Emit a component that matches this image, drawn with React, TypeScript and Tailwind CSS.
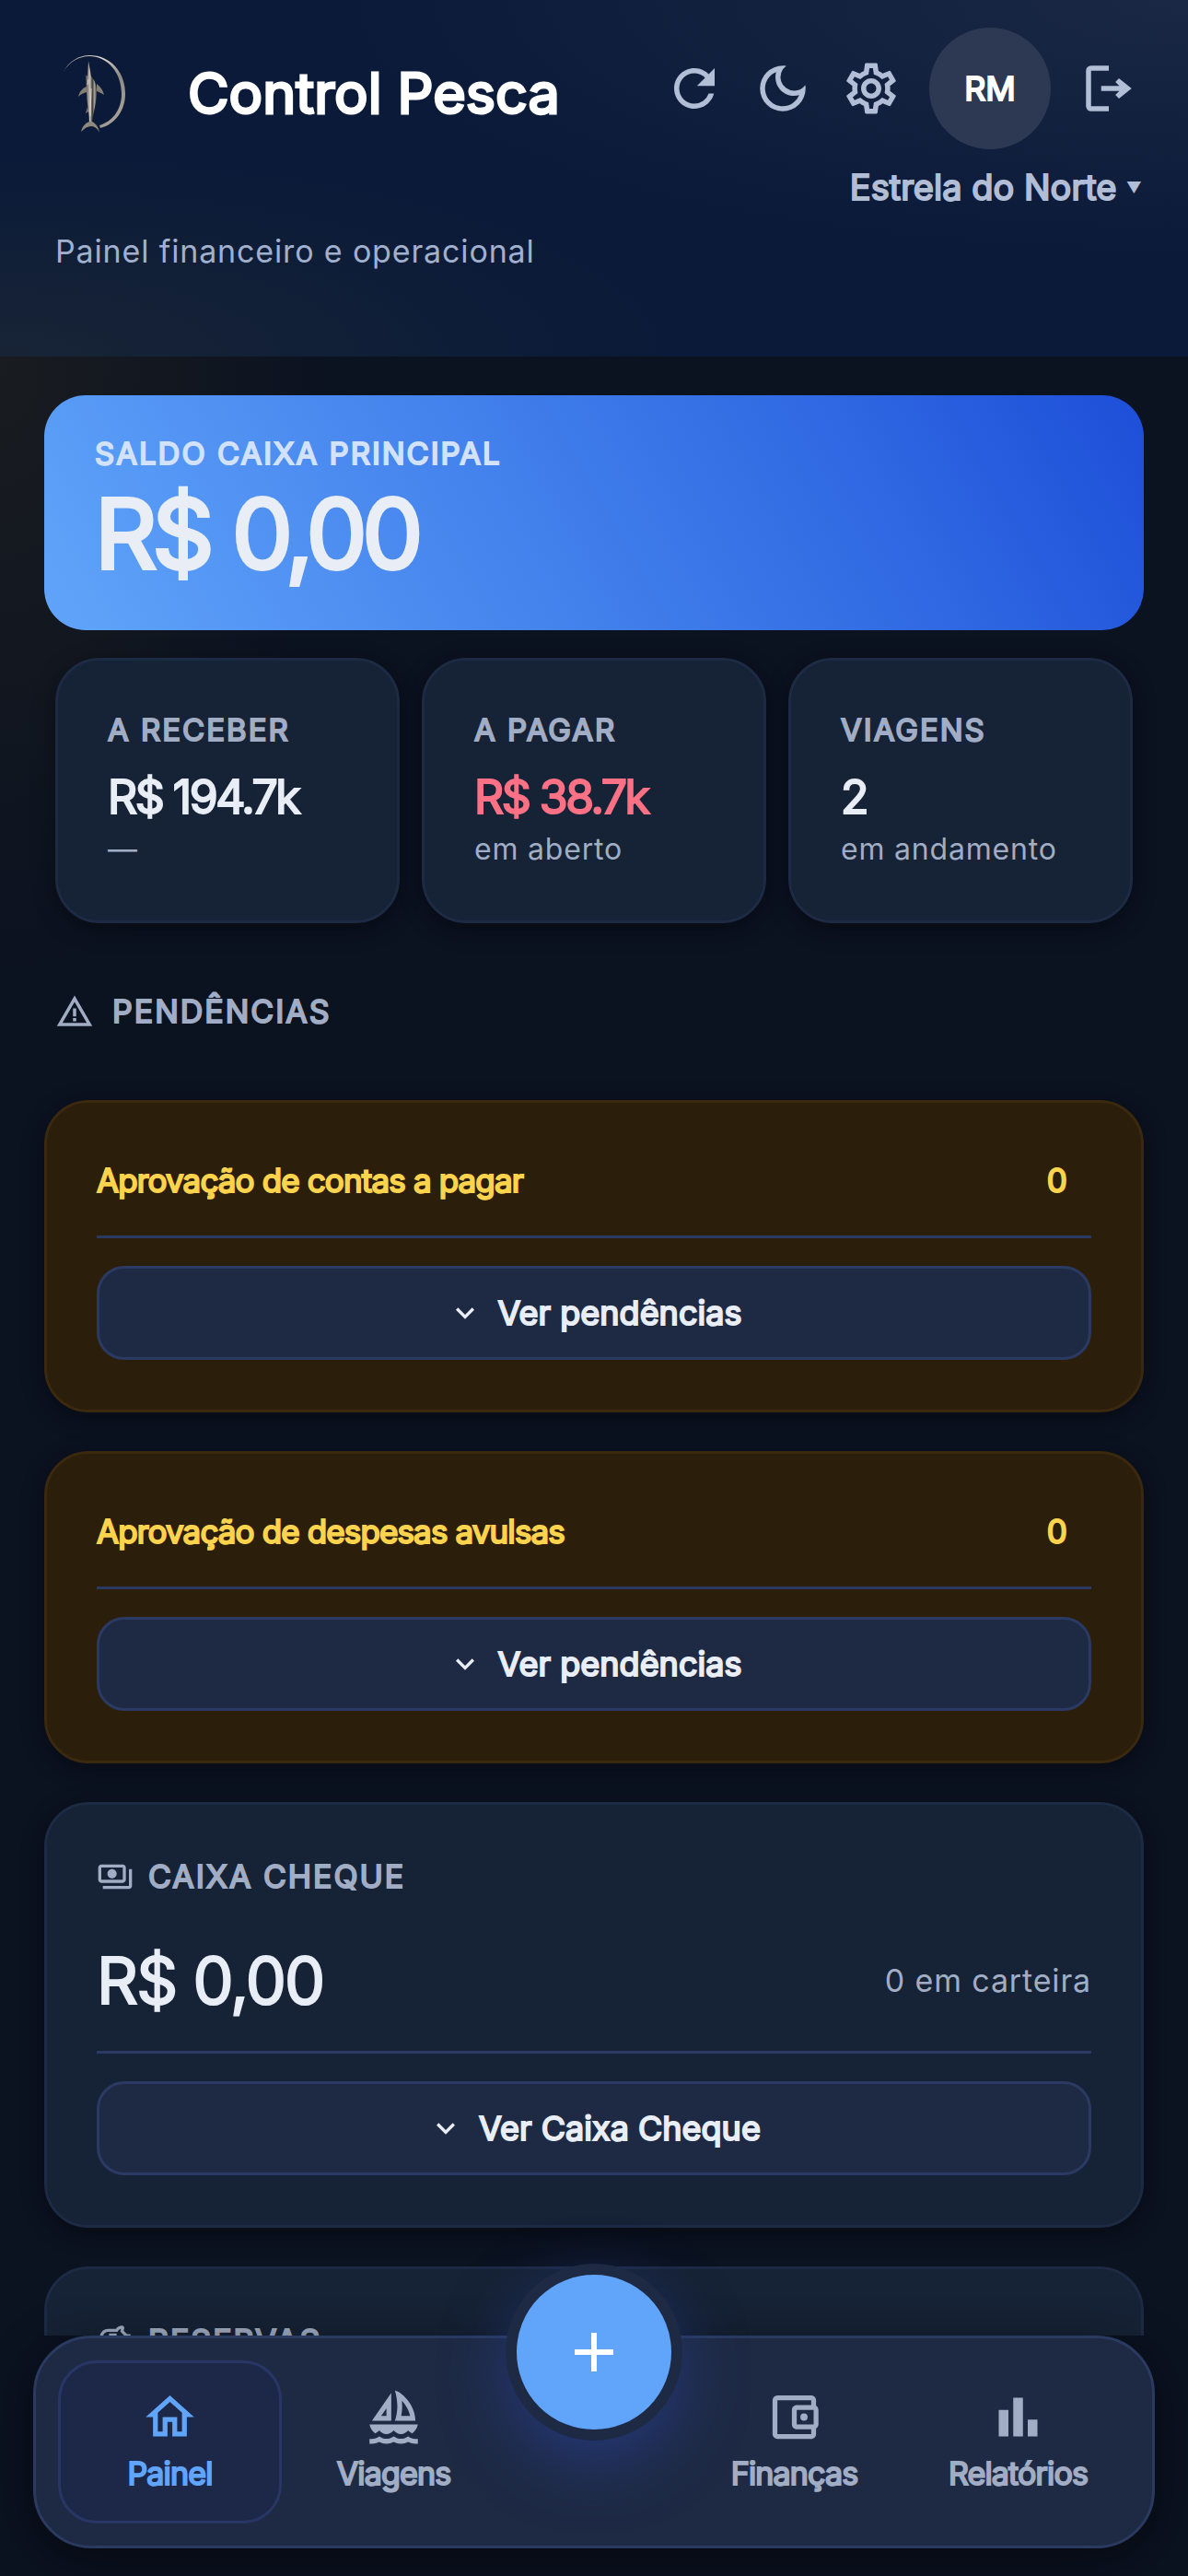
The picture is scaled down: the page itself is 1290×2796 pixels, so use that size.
import type { ReactNode } from 'react'
import {
  MdAdd,
  MdBarChart,
  MdExpandMore,
  MdOutlineAccountBalanceWallet,
  MdOutlineDarkMode,
  MdOutlineHome,
  MdOutlinePayments,
  MdOutlineSailing,
  MdOutlineSavings,
  MdOutlineSettings,
  MdRefresh,
  MdWarningAmber
} from 'react-icons/md'

const STATS = [
  { label: 'A receber', value: 'R$ 194.7k', note: '—', color: 'text-[#e9eef6]' },
  { label: 'A pagar', value: 'R$ 38.7k', note: 'em aberto', color: 'text-[#fb7185]' },
  { label: 'Viagens', value: '2', note: 'em andamento', color: 'text-[#e9eef6]' }
]

const PENDING = [
  { title: 'Aprovação de contas a pagar', count: 0 },
  { title: 'Aprovação de despesas avulsas', count: 0 }
]

export default function App() {
  return (
    <div className="flex h-screen flex-col overflow-hidden bg-[#0b1220] bg-[radial-gradient(ellipse_at_0%_14%,#191c20_0%,#0b1220_20%)] font-['Inter',sans-serif] text-[#e9eef6]">
      <Header />

      <main className="min-h-0 flex-1 overflow-hidden px-12 pt-[42px]">
        <section className="flex h-[255px] flex-col rounded-[45px] bg-[linear-gradient(60deg,#60a5fa,#2f68e2_74%,#1d4ed8)] px-[55px] pt-[42px]">
          <h2 className="text-[33px] leading-[42px] tracking-[2px] text-[#d3e2fb] uppercase [-webkit-text-stroke:2px]">
            Saldo caixa principal
          </h2>
          <p className="text-[105px] leading-[132px] tracking-tighter [-webkit-text-stroke:4px]">R$ 0,00</p>
        </section>

        <section className="mt-[30px] grid grid-cols-3 gap-6 px-3">
          {STATS.map(s => (
            <div
              key={s.label}
              className="h-[288px] rounded-[48px] border-3 border-[#1d2a44] bg-[#162235] px-[54px] pt-[54px] shadow-[0_6px_24px_rgba(0,0,0,0.4)]"
            >
              <h3 className="text-[33px] leading-[42px] tracking-[2px] text-[#a1adc4] uppercase [-webkit-text-stroke:2px]">
                {s.label}
              </h3>
              <p className={`mt-4 text-[50px] leading-[72px] tracking-tighter [-webkit-text-stroke:2px] ${s.color}`}>
                {s.value}
              </p>
              <p className="text-[32px] leading-[42px] tracking-wide whitespace-nowrap text-[#a1adc4]">
                {s.note}
              </p>
            </div>
          ))}
        </section>

        <h2 className="mt-[72px] flex items-center gap-5 px-3 text-[34px] leading-[48px] tracking-[2px] text-[#a1adc4] uppercase">
          <MdWarningAmber size={42} />
          <span className="[-webkit-text-stroke:2px]">Pendências</span>
        </h2>

        <div className="mt-[72px] flex flex-col gap-[42px]">
          {PENDING.map(p => (
            <section
              key={p.title}
              className="rounded-[48px] border-3 border-[#3b290f] bg-[#2b1e0b] p-[54px] shadow-[0_6px_24px_rgba(0,0,0,0.4)]"
            >
              <div className="flex h-[90px] items-start justify-between pt-[6px] pr-[27px] text-[35px] leading-[48px] tracking-tight text-[#fcd34d] [-webkit-text-stroke:2px]">
                <h3>{p.title}</h3>
                <span>{p.count}</span>
              </div>
              <Expand>Ver pendências</Expand>
            </section>
          ))}

          <section className="rounded-[48px] border-3 border-[#1d2a44] bg-[#162235] p-[54px] shadow-[0_6px_24px_rgba(0,0,0,0.4)]">
            <CardTitle icon={<MdOutlinePayments size={40} />}>Caixa cheque</CardTitle>
            <div className="flex h-[165px] items-center justify-between pt-3">
              <p className="text-[70px] leading-[90px] tracking-tight [-webkit-text-stroke:2px]">R$ 0,00</p>
              <p className="text-[34px] leading-[42px] tracking-wide text-[#a1adc4]">0 em carteira</p>
            </div>
            <Expand>Ver Caixa Cheque</Expand>
          </section>

          <section className="h-[400px] rounded-[48px] border-3 border-[#1d2a44] bg-[#162235] p-[54px]">
            <CardTitle icon={<MdOutlineSavings size={40} />}>Reservas</CardTitle>
          </section>
        </div>
      </main>

      <BottomNav />
    </div>
  )
}

function Header() {
  return (
    <header className="h-[387px] shrink-0 bg-[#0a1a38] bg-[radial-gradient(ellipse_at_100%_0%,#1a2845_0%,#0a1a3800_50%),radial-gradient(ellipse_at_0%_100%,#182436_0%,#0a1a3800_40%)] px-[60px] pt-[30px]">
      <div className="flex items-start justify-between">
        <div className="flex h-36 items-center gap-[60px]">
          <MarlinLogo />
          <h1 className="text-[61px] whitespace-nowrap text-white [-webkit-text-stroke:3px]">
            Control Pesca
          </h1>
        </div>

        <div className="-mr-[22px] flex flex-col items-end">
          <div className="flex items-center text-[#b2bdd6]">
            <IconButton label="Atualizar"><MdRefresh size={66} /></IconButton>
            <IconButton label="Tema escuro"><MdOutlineDarkMode size={66} /></IconButton>
            <IconButton label="Configurações"><MdOutlineSettings size={66} /></IconButton>
            <button
              aria-label="Perfil"
              className="mx-[15px] h-[132px] w-[132px] rounded-full bg-[#2d3952] text-[36px] text-white [-webkit-text-stroke:2px]"
            >
              RM
            </button>
            <IconButton label="Sair"><LogoutIcon /></IconButton>
          </div>
          <label className="mt-[17px] mr-[14px] flex items-center gap-3 text-[38px] leading-[48px] text-[#b2bdd6] [-webkit-text-stroke:2px]">
            <select aria-label="Embarcação" className="appearance-none bg-transparent">
              <option>Estrela do Norte</option>
            </select>
            <span aria-hidden="true" className="text-[13px]">▼</span>
          </label>
        </div>
      </div>
      <p className="mt-[25px] text-[34px] leading-[42px] tracking-wide text-[#a1b0cd]">
        Painel financeiro e operacional
      </p>
    </header>
  )
}

function IconButton({ label, children }: { label: string; children: ReactNode }) {
  return (
    <button aria-label={label} className="flex h-24 w-24 items-center justify-center">
      {children}
    </button>
  )
}

function CardTitle({ icon, children }: { icon: ReactNode; children: ReactNode }) {
  return (
    <h2 className="flex items-center gap-4 text-[34px] leading-[48px] tracking-[2px] text-[#a1adc4] uppercase">
      {icon}
      <span className="[-webkit-text-stroke:2px]">{children}</span>
    </h2>
  )
}

function Expand({ children }: { children: ReactNode }) {
  return (
    <div className="border-t-3 border-[#2b3a63] pt-[30px]">
      <button className="flex h-[102px] w-full items-center justify-center gap-4 rounded-[30px] border-3 border-[#2b3a63] bg-[#1e2a44] text-[36px] text-[#e9eef6]">
        <MdExpandMore size={40} />
        <span className="[-webkit-text-stroke:2px]">{children}</span>
      </button>
    </div>
  )
}

function BottomNav() {
  return (
    <nav className="relative mx-9 mb-[30px] flex h-[231px] shrink-0 rounded-[63px] border-3 border-[#2a3a60] bg-[#1e2a44] px-6 py-6 shadow-[0_12px_48px_rgba(0,0,0,0.5)]">
      <NavItem icon={<MdOutlineHome size={63} />} active>Painel</NavItem>
      <NavItem icon={<MdOutlineSailing size={63} />}>Viagens</NavItem>
      <button
        aria-label="Adicionar"
        className="-mt-[105px] flex h-48 w-48 shrink-0 items-center justify-center rounded-full border-12 border-[#1e2a44] bg-[#60a5fa] text-white shadow-[0_24px_66px_rgba(40,64,150,0.6)]"
      >
        <MdAdd size={72} />
      </button>
      <NavItem icon={<MdOutlineAccountBalanceWallet size={63} />}>Finanças</NavItem>
      <NavItem icon={<MdBarChart size={63} />}>Relatórios</NavItem>
    </nav>
  )
}

function NavItem({ icon, active, children }: { icon: ReactNode; active?: boolean; children: ReactNode }) {
  return (
    <a
      href="#"
      className={`flex min-w-0 flex-1 flex-col items-center rounded-[42px] border-3 pt-[27px] text-[34px] leading-[60px] tracking-tight ${
        active ? 'border-[#283666] bg-[#1d2849] text-[#60a5fa]' : 'border-transparent text-[#a1adc4]'
      }`}
    >
      {icon}
      <span className="[-webkit-text-stroke:2px]">{children}</span>
    </a>
  )
}

function LogoutIcon() {
  return (
    <svg width="66" height="66" viewBox="0 0 24 24" fill="currentColor">
      <path d="M16 16l-1.4-1.45 1.55-1.55H9v-2h7.15L14.6 9.45 16 8l5 4zM5 21q-.825 0-1.412-.587T3 19V5q0-.825.588-1.412T5 3h7v2H5v14h7v2z" />
    </svg>
  )
}

function MarlinLogo() {
  return (
    <svg width="84" height="120" viewBox="10 2 84 120">
      <defs>
        <linearGradient id="ring" x1="0" y1="0" x2="1" y2="1">
          <stop offset="0" stopColor="#8a8480" />
          <stop offset="0.3" stopColor="#e4dfda" />
          <stop offset="0.6" stopColor="#8f8984" />
          <stop offset="1" stopColor="#b2aba2" />
        </linearGradient>
        <linearGradient id="body" x1="0" y1="0" x2="1" y2="0">
          <stop offset="0" stopColor="#55504b" />
          <stop offset="0.4" stopColor="#c9c4bd" />
          <stop offset="0.6" stopColor="#3b3733" />
          <stop offset="0.8" stopColor="#a8a199" />
          <stop offset="1" stopColor="#4a4540" />
        </linearGradient>
      </defs>
      <path d="M18 39C25 26 36 20 47 20c23 0 39 18 39 42 0 18-11 33-27 37l-1-3c14-4 24-17 24-34 0-23-15-41-35-41-11 0-22 6-29 18z" fill="url(#ring)" />
      <path d="M46 26l3 17c4 4 6 10 6 17 0 12-4 22-5 33h-3c0-11-3-22-3-33l-1-19 2 2z" fill="url(#body)" />
      <path d="M44 54c-5 2-8 6-9 11 3-3 6-4 9-5zM55 51c4 3 7 7 8 12-3-2-5-3-8-4zM45 76l-2 7 3-2z" fill="#847d75" />
      <path d="M47 92c-5 2-8 6-9 11 4-4 7-6 11-6 4 0 7 3 9 7-1-6-4-10-8-12z" fill="#8f887f" />
      <path d="M46 46l-1 6M49 56l-1 30" stroke="#d9d4cd" strokeWidth="1" />
    </svg>
  )
}
